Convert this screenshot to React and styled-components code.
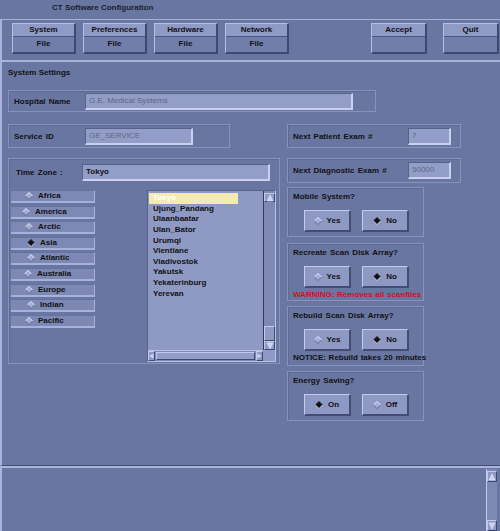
import styled, { createGlobalStyle } from "styled-components";

const GlobalStyle = createGlobalStyle`
  html, body {
    margin: 0;
    padding: 0;
    background: #6a76a2;
  }
  * {
    box-sizing: border-box;
  }
`;

const Screen = styled.div`
  width: 500px;
  height: 531px;
  background: #6a76a2;
  font-family: "Liberation Sans", Arial, sans-serif;
  font-size: 8px;
  color: #111;
  display: flex;
  flex-direction: column;
  overflow: hidden;
`;

const TitleBar = styled.div`
  height: 19px;
  line-height: 15px;
  padding-left: 52px;
  font-weight: bold;
  color: #1a1e30;
`;

const Toolbar = styled.div`
  height: 43px;
  border-top: 1px solid #a6b0d8;
  border-bottom: 2px solid #a9b3dc;
  border-left: 2px solid #a9b3dc;
  padding: 3px 0 0 10px;
  display: flex;
  gap: 7px;
`;

const Spacer = styled.div`
  flex: 1;
`;

const ToolButton = styled.div`
  width: ${(p) => p.$w || 64}px;
  height: 31px;
  margin-right: ${(p) => p.$mr || 0}px;
  border-top: 1px solid #b6bfe4;
  border-left: 1px solid #b6bfe4;
  border-right: 2px solid #3f4870;
  border-bottom: 2px solid #3f4870;
  display: flex;
  flex-direction: column;
  font-weight: bold;
`;

const ToolLabel = styled.div`
  height: 13px;
  line-height: 12px;
  text-align: center;
  background: #8f9ac5;
  border-bottom: 1px solid #4a5480;
`;

const ToolSub = styled.div`
  flex: 1;
  line-height: 14px;
  text-align: center;
  background: #717dab;
`;

const Main = styled.div`
  height: 404px;
  border-left: 2px solid #a9b3dc;
  border-bottom: 1px solid #444d76;
  padding: 5px 0 0 6px;
  display: flex;
  flex-direction: column;
`;

const Heading = styled.div`
  height: 12px;
  line-height: 12px;
  font-weight: bold;
  margin-bottom: 11px;
`;

const Group = styled.div`
  width: ${(p) => p.$w}px;
  height: ${(p) => p.$h}px;
  margin-top: ${(p) => p.$mt || 0}px;
  border: 1px solid #8892bd;
  box-shadow: inset 1px 1px 0 #5e6994;
  padding: ${(p) => p.$pad || "0 0 0 5px"};
  display: flex;
  flex-direction: ${(p) => (p.$col ? "column" : "row")};
  align-items: ${(p) => (p.$col ? "stretch" : "center")};
  flex-shrink: 0;
`;

const Label = styled.div`
  width: ${(p) => p.$w}px;
  font-weight: bold;
  flex-shrink: 0;
  white-space: nowrap;
  word-spacing: 1px;
`;

const Field = styled.div`
  width: ${(p) => p.$w}px;
  height: ${(p) => p.$h || 17}px;
  background: #939ec8;
  border-top: 1px solid #56618c;
  border-left: 1px solid #56618c;
  border-right: 2px solid #c9d0f0;
  border-bottom: 2px solid #c9d0f0;
  padding-left: 3px;
  line-height: 13px;
  color: ${(p) => (p.$dark ? "#111" : "#5d6585")};
  font-weight: ${(p) => (p.$dark ? "bold" : "normal")};
  white-space: nowrap;
  overflow: hidden;
`;

const Columns = styled.div`
  display: flex;
  gap: 7px;
  margin-top: 12px;
`;

const Column = styled.div`
  display: flex;
  flex-direction: column;
`;

const TzHeader = styled.div`
  display: flex;
  align-items: center;
  height: 16px;
  margin: 5px 0 10px 7px;
`;

const TzBody = styled.div`
  display: flex;
  padding-left: 2px;
`;

const RegionList = styled.div`
  width: 84px;
  display: flex;
  flex-direction: column;
  gap: 2.6px;
  margin-right: 52px;
`;

const Region = styled.div`
  height: 13px;
  background: #7d88b5;
  border-top: 1px solid #6672a0;
  border-bottom: 2px solid #a7b1da;
  border-right: 1px solid #a7b1da;
  display: flex;
  align-items: center;
  padding-left: ${(p) => p.$pl}px;
  gap: 5px;
  font-weight: bold;
  line-height: 10px;
`;

const ListBox = styled.div`
  width: 129px;
  height: 172px;
  display: grid;
  grid-template-columns: 1fr 12px;
  grid-template-rows: 1fr 11px;
  border-top: 1px solid #56618c;
  border-left: 1px solid #56618c;
  border-right: 1px solid #b9c1e6;
  border-bottom: 1px solid #b9c1e6;
`;

const ListArea = styled.div`
  background: #8f9ac4;
  padding: 2px 0 0 1px;
  display: flex;
  flex-direction: column;
`;

const ListItem = styled.div`
  height: 10.65px;
  line-height: 10px;
  padding-left: 4px;
  font-weight: bold;
  color: ${(p) => (p.$sel ? "#fff" : "#111")};
  background: ${(p) => (p.$sel ? "#f3eab4" : "transparent")};
  width: ${(p) => (p.$sel ? "89px" : "auto")};
`;

const VScroll = styled.div`
  background: #7d88b3;
  border-left: 1px solid #303a60;
  display: flex;
  flex-direction: column;
  justify-content: space-between;
  padding-top: 2px;
`;

const HScroll = styled.div`
  background: #7d88b3;
  border-top: 1px solid #b9c1e6;
  display: flex;
  align-items: center;
  justify-content: space-between;
`;

const Corner = styled.div`
  background: #8f9ac4;
`;

const ScrollArrow = styled.div`
  width: ${(p) => p.$w}px;
  height: ${(p) => p.$h}px;
  background: #8f9ac4;
  border-top: 1px solid #c2caee;
  border-left: 1px solid #c2caee;
  border-right: 1px solid #3f4870;
  border-bottom: 1px solid #3f4870;
  display: flex;
  align-items: center;
  justify-content: center;
  flex-shrink: 0;
`;

const ThumbStack = styled.div`
  display: flex;
  flex-direction: column;
`;

const HThumb = styled.div`
  flex: 1;
  height: 8px;
  margin: 0 1px;
  background: #939ec8;
  border-top: 1px solid #c2caee;
  border-left: 1px solid #c2caee;
  border-bottom: 1px solid #3f4870;
  border-right: 1px solid #3f4870;
`;

const Question = styled.div`
  font-weight: bold;
  height: 10px;
  line-height: 10px;
  margin: 2px 0 ${(p) => p.$mb || 8}px 0;
  white-space: nowrap;
  word-spacing: 1px;
`;

const ChoiceRow = styled.div`
  display: flex;
  gap: 11px;
  padding-left: 11px;
`;

const Choice = styled.div`
  width: 47px;
  height: 22px;
  background: #8d98c3;
  border-top: 1px solid #c3cbef;
  border-left: 1px solid #c3cbef;
  border-right: 2px solid #434c74;
  border-bottom: 2px solid #434c74;
  display: flex;
  align-items: center;
  justify-content: center;
  gap: 5px;
  font-weight: bold;
`;

const Note = styled.div`
  font-weight: bold;
  color: ${(p) => p.$color || "#111"};
  margin-top: 2px;
  height: 10px;
  line-height: 10px;
  white-space: nowrap;
  word-spacing: 0.5px;
`;

const BottomPanel = styled.div`
  flex: 1;
  border-top: 2px solid #a9b3dc;
  border-left: 2px solid #a9b3dc;
  display: flex;
  justify-content: flex-end;
  padding: 1px 3px 0 0;
`;

const PanelScroll = styled.div`
  width: 11px;
  background: #7d88b3;
  border-left: 1px solid #c2caee;
  display: flex;
  flex-direction: column;
  justify-content: space-between;
  padding-top: 2px;
`;

const Diamond = ({ on }) => (
  <svg width="8" height="8" viewBox="0 0 9 9">
    <polygon
      points="4.5,0.5 8.5,4.5 4.5,8.5 0.5,4.5"
      fill={on ? "#111" : "#a3acd4"}
    />
    <polyline
      points="0.5,4.5 4.5,0.5 8.5,4.5"
      fill="none"
      stroke={on ? "#222" : "#f2f4ff"}
      strokeWidth="1"
    />
    <polyline
      points="0.5,4.5 4.5,8.5 8.5,4.5"
      fill="none"
      stroke={on ? "#d8def8" : "#5c6690"}
      strokeWidth="1"
    />
  </svg>
);

const Tri = ({ dir }) => {
  const pts = {
    up: "4,1 7,7 1,7",
    down: "1,1 7,1 4,7",
    left: "1,4 7,1 7,7",
    right: "1,1 7,4 1,7",
  }[dir];
  return (
    <svg width="8" height="8" viewBox="0 0 8 8">
      <polygon points={pts} fill="#c9d0f2" stroke="#e8ecff" strokeWidth="0.6" />
    </svg>
  );
};

const toolItems = [
  ["System", "File"],
  ["Preferences", "File"],
  ["Hardware", "File"],
  ["Network", "File"],
];

const regions = [
  ["Africa", false, 14],
  ["America", false, 11],
  ["Arctic", false, 14],
  ["Asia", true, 16],
  ["Atlantic", false, 16],
  ["Australia", false, 13],
  ["Europe", false, 14],
  ["Indian", false, 16],
  ["Pacific", false, 14],
];

const zones = [
  "Ujung_Pandang",
  "Ulaanbaatar",
  "Ulan_Bator",
  "Urumqi",
  "Vientiane",
  "Vladivostok",
  "Yakutsk",
  "Yekaterinburg",
  "Yerevan",
];

const ChoicePair = ({ a, b, first }) => (
  <ChoiceRow>
    <Choice>
      <Diamond on={first} /> {a}
    </Choice>
    <Choice>
      <Diamond on={!first} /> {b}
    </Choice>
  </ChoiceRow>
);

const App = () => {
  return (
    <>
      <GlobalStyle />
      <Screen>
        <TitleBar>CT Software Configuration</TitleBar>
        <Toolbar>
          {toolItems.map(([label, sub]) => (
            <ToolButton key={label}>
              <ToolLabel>{label}</ToolLabel>
              <ToolSub>{sub}</ToolSub>
            </ToolButton>
          ))}
          <Spacer />
          <ToolButton $w={56} $mr={9}>
            <ToolLabel>Accept</ToolLabel>
            <ToolSub />
          </ToolButton>
          <ToolButton $w={56} $mr={1}>
            <ToolLabel>Quit</ToolLabel>
            <ToolSub />
          </ToolButton>
        </Toolbar>

        <Main>
          <Heading>System Settings</Heading>
          <Group $w={368} $h={22}>
            <Label $w={71}>Hospital Name</Label>
            <Field $w={268} $h={17}>G.E. Medical Systems</Field>
          </Group>

          <Columns>
            <Column>
              <Group $w={222} $h={24}>
                <Label $w={71}>Service ID</Label>
                <Field $w={108}>GE_SERVICE</Field>
              </Group>
              <Group $w={272} $h={206} $col $pad="0" $mt={10}>
                <TzHeader>
                  <Label $w={66}>Time Zone :</Label>
                  <Field $w={188} $h={17} $dark>
                    Tokyo
                  </Field>
                </TzHeader>
                <TzBody>
                  <RegionList>
                    {regions.map(([name, on, pl]) => (
                      <Region key={name} $pl={pl}>
                        <Diamond on={on} />
                        {name}
                      </Region>
                    ))}
                  </RegionList>
                  <ListBox>
                    <ListArea>
                      <ListItem $sel>Tokyo</ListItem>
                      {zones.map((z) => (
                        <ListItem key={z}>{z}</ListItem>
                      ))}
                    </ListArea>
                    <VScroll>
                      <ScrollArrow $w={11} $h={9}>
                        <Tri dir="up" />
                      </ScrollArrow>
                      <ThumbStack>
                        <ScrollArrow $w={11} $h={15} />
                        <ScrollArrow $w={11} $h={9}>
                          <Tri dir="down" />
                        </ScrollArrow>
                      </ThumbStack>
                    </VScroll>
                    <HScroll>
                      <ScrollArrow $w={7} $h={10}>
                        <Tri dir="left" />
                      </ScrollArrow>
                      <HThumb />
                      <ScrollArrow $w={7} $h={10}>
                        <Tri dir="right" />
                      </ScrollArrow>
                    </HScroll>
                    <Corner />
                  </ListBox>
                </TzBody>
              </Group>
            </Column>

            <Column>
              <Group $w={174} $h={24}>
                <Label $w={115}>Next Patient Exam #</Label>
                <Field $w={43}>7</Field>
              </Group>
              <Group $w={174} $h={25} $mt={10}>
                <Label $w={115}>Next Diagnostic Exam #</Label>
                <Field $w={43}>50000</Field>
              </Group>
              <Group $w={137} $h={50} $col $pad="2px 0 0 5px" $mt={4}>
                <Question>Mobile System?</Question>
                <ChoicePair a="Yes" b="No" first={false} />
              </Group>
              <Group $w={137} $h={58} $col $pad="2px 0 0 5px" $mt={6}>
                <Question>Recreate Scan Disk Array?</Question>
                <ChoicePair a="Yes" b="No" first={false} />
                <Note $color="#d0101c">WARNING: Removes all scanfiles</Note>
              </Group>
              <Group $w={137} $h={60} $col $pad="2px 0 0 5px" $mt={5}>
                <Question>Rebuild Scan Disk Array?</Question>
                <ChoicePair a="Yes" b="No" first={false} />
                <Note>NOTICE: Rebuild takes 20 minutes</Note>
              </Group>
              <Group $w={137} $h={50} $col $pad="2px 0 0 5px" $mt={5}>
                <Question>Energy Saving?</Question>
                <ChoicePair a="On" b="Off" first />
              </Group>
            </Column>
          </Columns>
        </Main>

        <BottomPanel>
          <PanelScroll>
            <ScrollArrow $w={10} $h={11}>
              <Tri dir="up" />
            </ScrollArrow>
            <ScrollArrow $w={10} $h={11}>
              <Tri dir="down" />
            </ScrollArrow>
          </PanelScroll>
        </BottomPanel>
      </Screen>
    </>
  );
};

export default App;
